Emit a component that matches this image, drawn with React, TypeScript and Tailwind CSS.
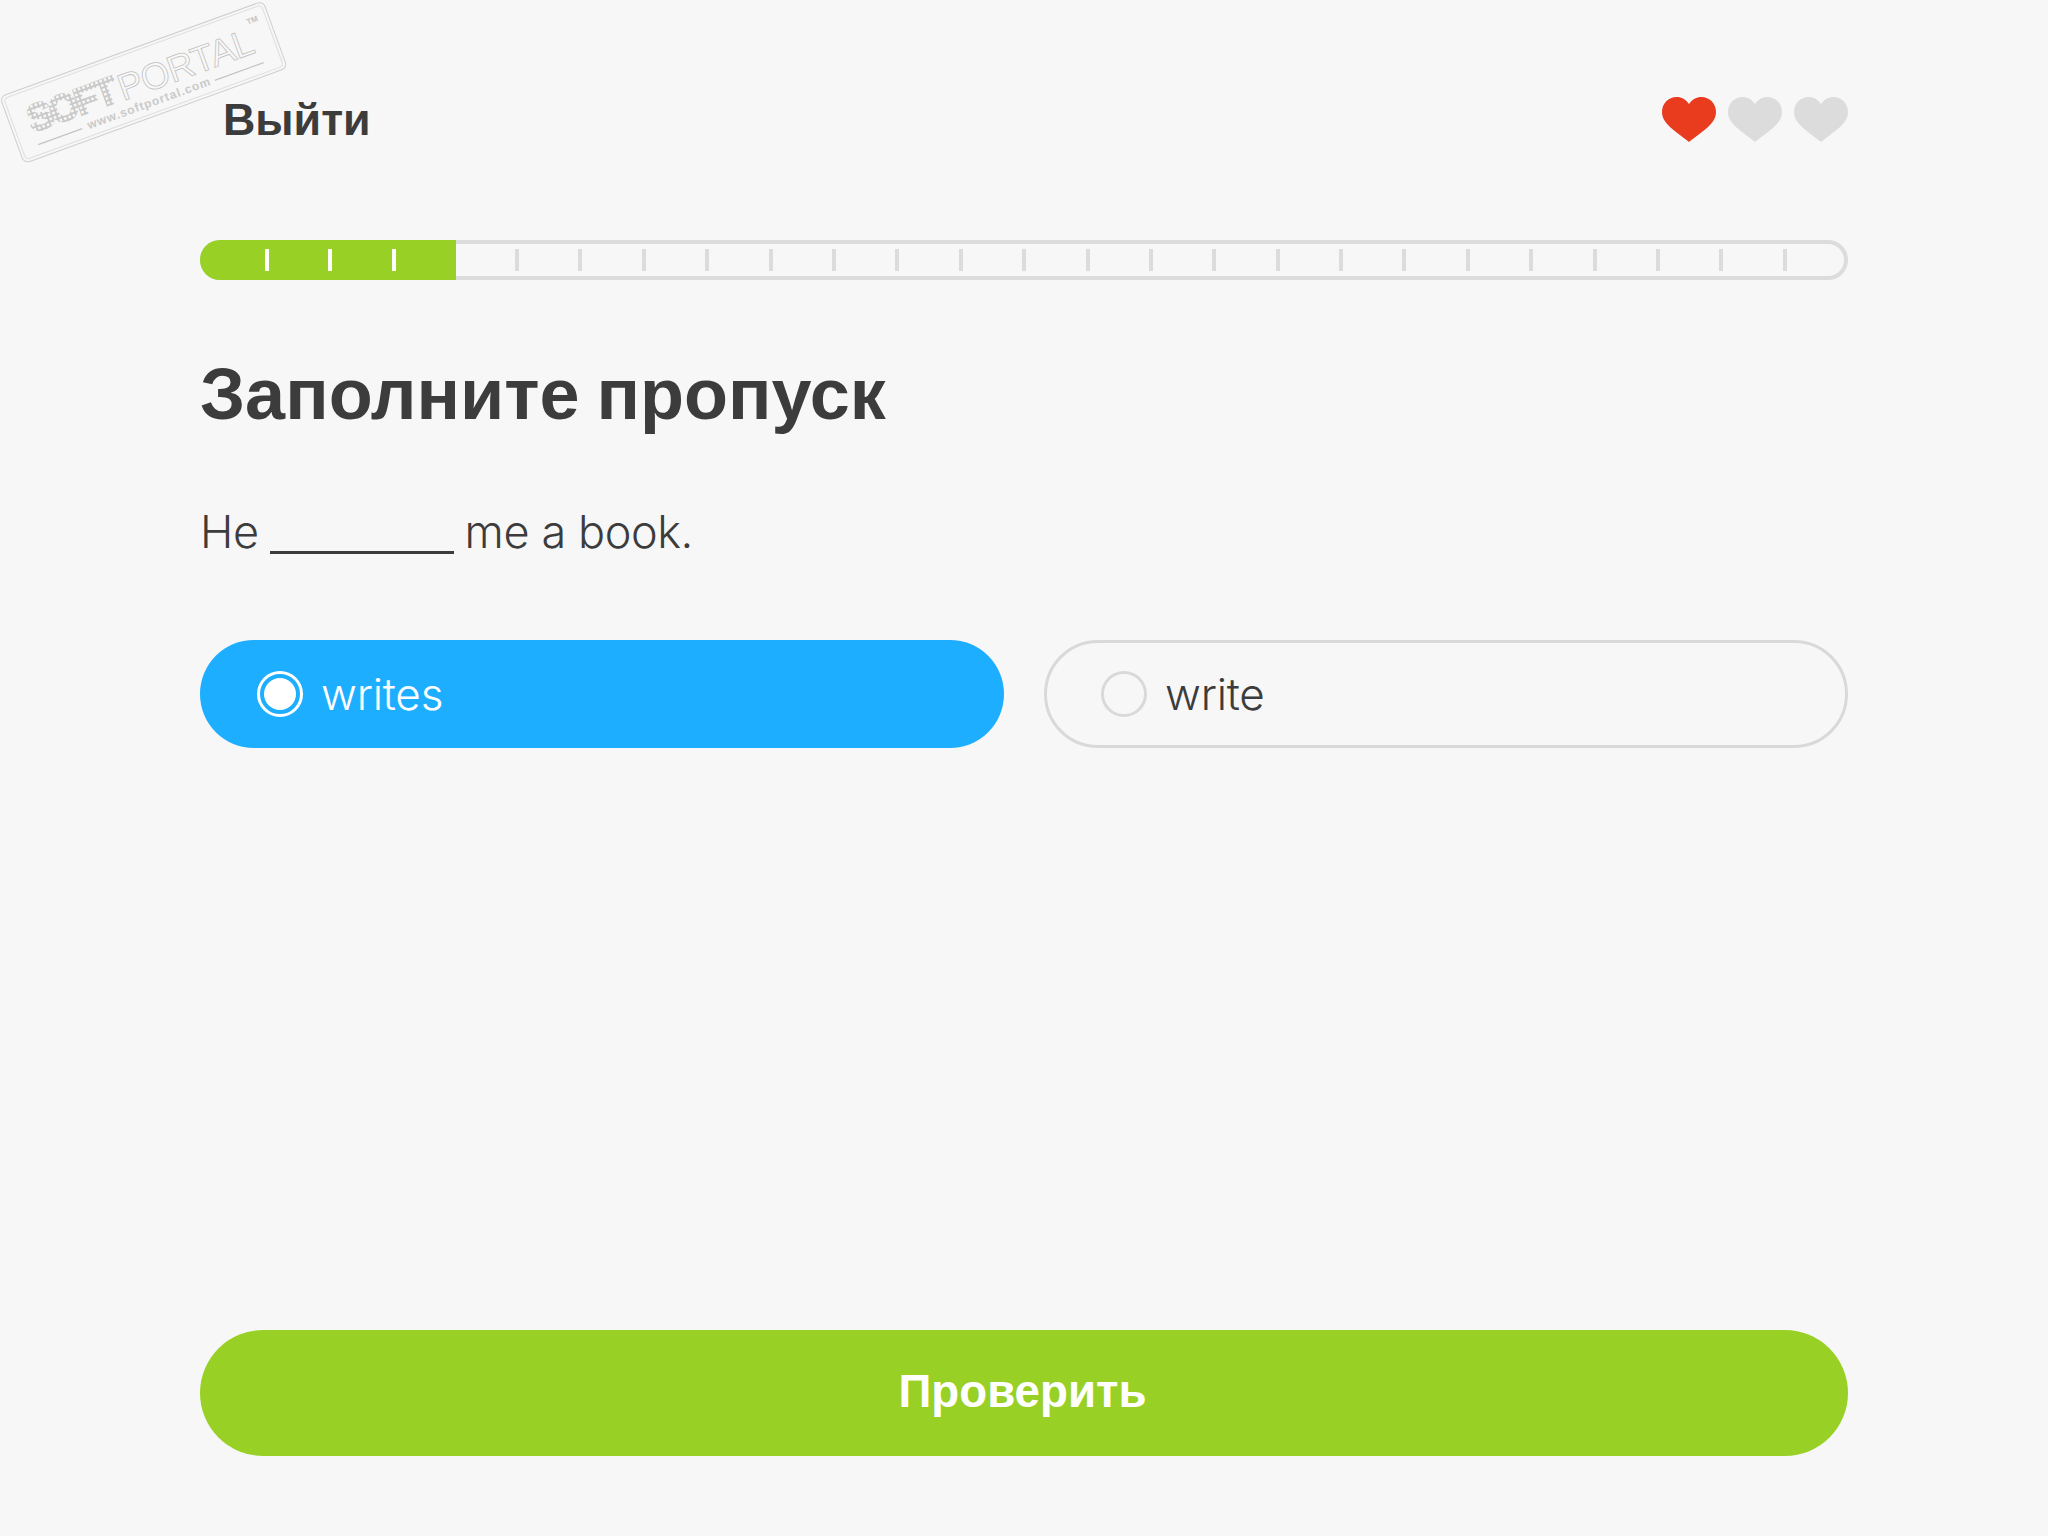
const sans = "font-['Liberation_Sans',Arial,sans-serif]";
const soft = "font-['Inter','Lato',sans-serif]";

function Heart({ className }: { className: string }) {
  return (
    <svg viewBox="0 0 54 45" className={`h-[45px] w-[54px] ${className}`} fill="currentColor">
      <path d="M27 45 C20 39 9 32.5 3.5 25 C1 21.5 0 18.5 0 15 C0 6.5 6.5 0 14.5 0 C19.5 0 24 2.5 27 7 C30 2.5 34.5 0 39.5 0 C47.5 0 54 6.5 54 15 C54 18.5 53 21.5 50.5 25 C45 32.5 34 39 27 45 Z" />
    </svg>
  );
}

function Watermark() {
  return (
    <svg viewBox="0 0 290 170" className="absolute left-0 top-0 h-[170px] w-[290px]" fill="none">
      <defs>
        <pattern id="dots" width="4.6" height="4.6" patternUnits="userSpaceOnUse">
          <rect x="0.5" y="0.5" width="3.6" height="3.6" fill="#f7f7f7" stroke="#c6c6c6" strokeWidth="0.9" />
        </pattern>
      </defs>
      <g transform="rotate(-20 143 82)">
        <rect x="3.5" y="47" width="280" height="71" rx="6" stroke="#cecece" strokeWidth="1" />
        <rect x="6.5" y="50" width="274" height="65" rx="4" stroke="#dedede" strokeWidth="1" />
        <text x="22" y="92" fontFamily="'Liberation Sans', sans-serif" fontWeight="700" fontSize="38" fill="url(#dots)" stroke="url(#dots)" strokeWidth="2" textLength="94">SOFT</text>
        <text x="118" y="93" fontFamily="'Liberation Sans', sans-serif" fontSize="37" stroke="#c2c2c2" strokeWidth="0.8" fill="#f9f9f9" textLength="142">PORTAL</text>
        <text x="261" y="64" fontFamily="'Liberation Sans', sans-serif" fontWeight="700" fontSize="8" fill="#c4c4c4">TM</text>
        <text x="76" y="108" fontFamily="'Liberation Sans', sans-serif" fontWeight="700" fontSize="12" fill="#cacaca" textLength="130">www.softportal.com</text>
        <line x1="23" y1="105" x2="70" y2="105" stroke="#c4c4c4" strokeWidth="1.2" />
        <line x1="211" y1="105" x2="263" y2="105" stroke="#c4c4c4" strokeWidth="1.2" />
      </g>
    </svg>
  );
}

function ProgressBar() {
  const filled = [0, 1, 2];
  const rest = Array.from({ length: 21 }, (_, i) => i);
  return (
    <div className="relative mt-[98px] h-10 w-full rounded-[20px] border-4 border-[#dcdcdc]">
      <div className="absolute -left-1 -top-1 flex h-10 w-[256px] items-center rounded-l-[20px] bg-[#98d026] pl-[65px]">
        {filled.map((i) => (
          <div key={i} className="mr-[59.4px] h-[22px] w-1 shrink-0 bg-white" />
        ))}
      </div>
      <div className="absolute left-[311px] top-[5px] flex h-[22px]">
        {rest.map((i) => (
          <div key={i} className="mr-[59.4px] h-[22px] w-1 shrink-0 bg-[#dcdcdc]" />
        ))}
      </div>
    </div>
  );
}

function Option({ label, selected }: { label: string; selected?: boolean }) {
  return (
    <div
      className={`flex h-[108px] items-center rounded-[54px] ${
        selected ? "bg-[#1eaeff] pl-[57px] text-white" : "border-[3px] border-[#d9d9d9] pl-[54px] text-[#3c3c3c]"
      }`}
    >
      <div
        className={`flex h-[46px] w-[46px] shrink-0 items-center justify-center rounded-full border-[3px] ${
          selected ? "border-white" : "border-[#d9d9d9]"
        }`}
      >
        {selected && <div className="h-[32px] w-[32px] rounded-full bg-white" />}
      </div>
      <span className={`${soft} ml-[18px] text-[44px] font-light leading-none tracking-[-0.2px]`}>{label}</span>
    </div>
  );
}

export default function App() {
  return (
    <div className="relative h-[1536px] w-[2048px] overflow-hidden bg-[#f7f7f7] px-[200px] pt-[97px] text-[#3c3c3c]">
      <Watermark />
      <header className="flex h-[45px] items-center justify-between">
        <span className={`${sans} ml-[23px] pb-px text-[44.8px] font-bold leading-none`}>Выйти</span>
        <div className="flex gap-3">
          <Heart className="text-[#e93c1f]" />
          <Heart className="text-[#dcdcdc]" />
          <Heart className="text-[#dcdcdc]" />
        </div>
      </header>
      <ProgressBar />
      <h1 className={`${sans} mt-[74px] text-[72px] font-bold leading-[80px] [word-spacing:-3px]`}>Заполните пропуск</h1>
      <p className={`${soft} mt-[70px] flex items-baseline text-[45px] font-light leading-[56px] tracking-[-0.4px]`}>
        He
        <span className="ml-[11px] mr-[11px] inline-block h-[3px] w-[184px] translate-y-[6px] bg-[#3c3c3c]" />
        me a book.
      </p>
      <div className="mt-[80px] grid grid-cols-2 gap-10">
        <Option label="writes" selected />
        <Option label="write" />
      </div>
      <button className={`${sans} mt-[582px] flex h-[126px] w-full items-center justify-center rounded-[63px] bg-[#98d026] pb-[2px] pr-[3px] text-[45.7px] font-bold text-white`}>
        Проверить
      </button>
    </div>
  );
}
